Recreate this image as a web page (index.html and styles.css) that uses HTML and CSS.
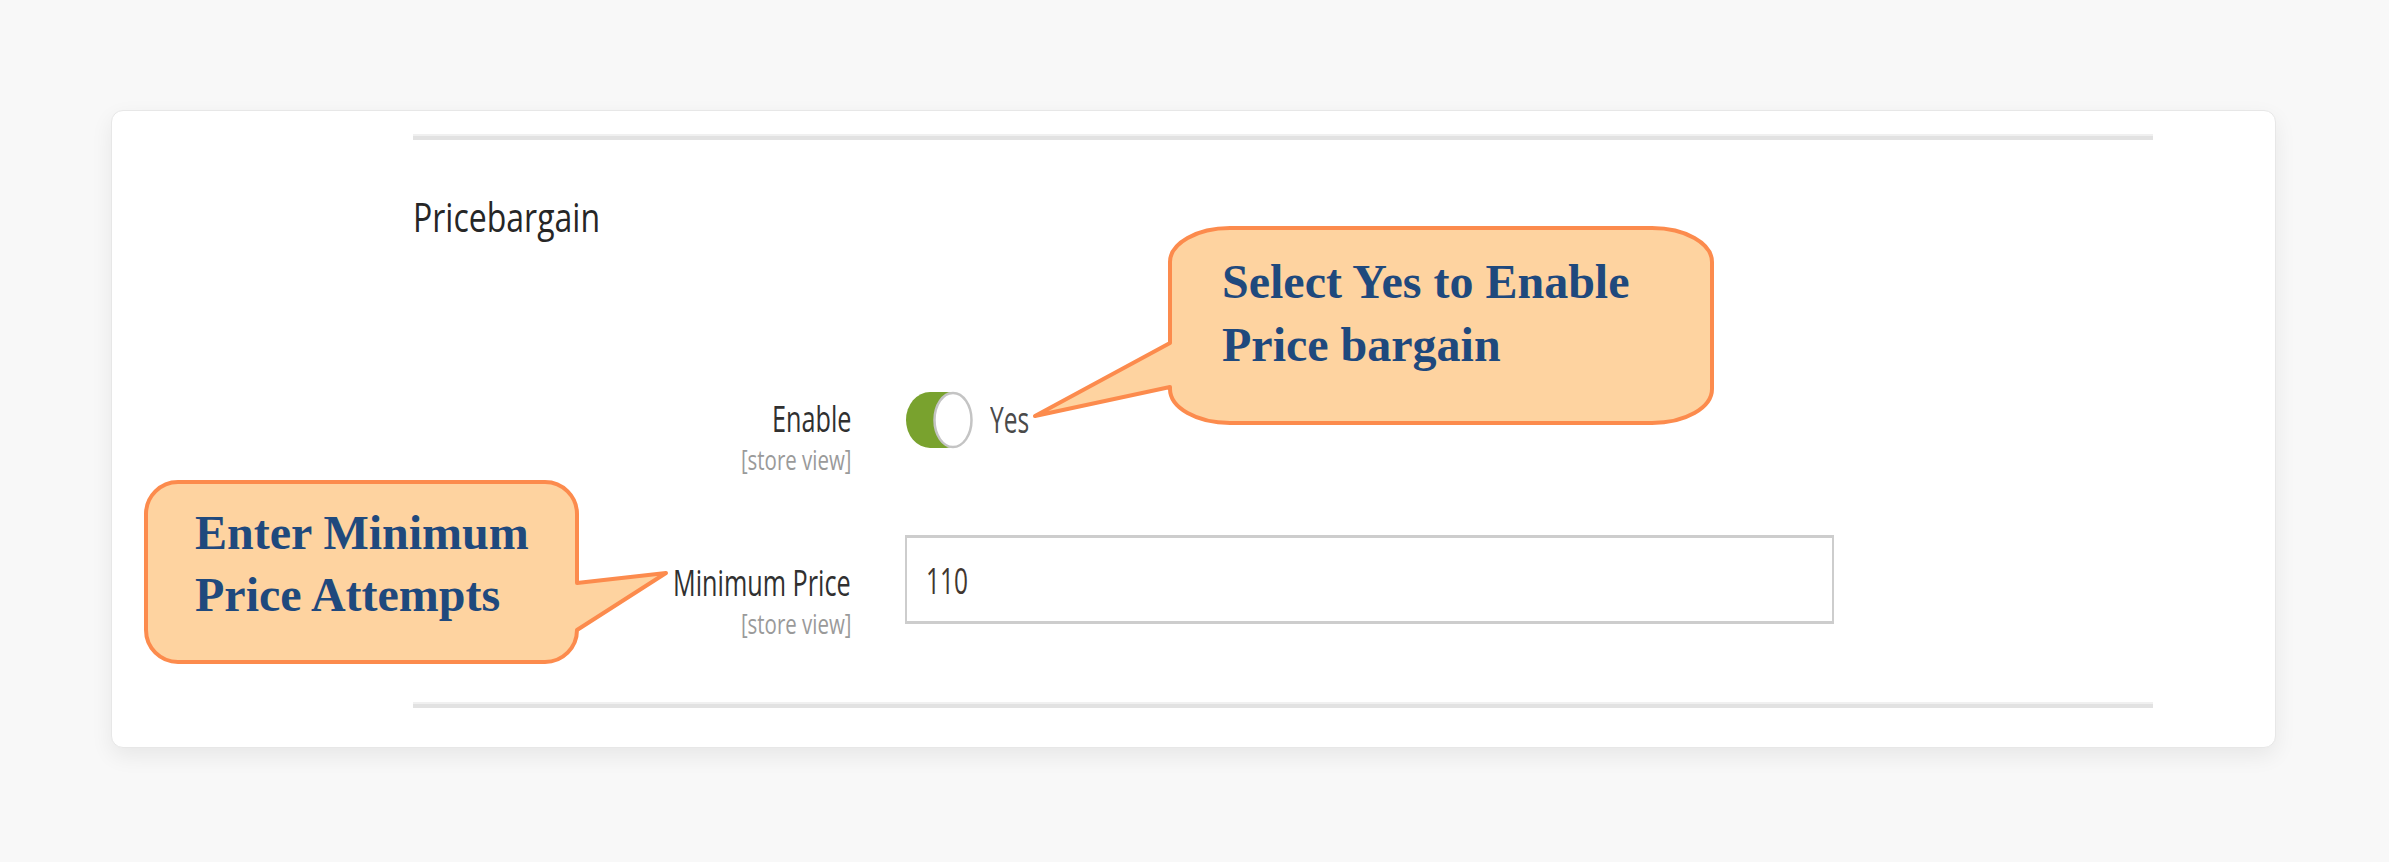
FILE: index.html
```html
<!DOCTYPE html>
<html lang="en">
<head>
<meta charset="utf-8">
<title>Pricebargain</title>
<link rel="stylesheet" href="styles.css">
</head>
<body>
<div class="page">
  <section class="card">
    <div class="content">
      <div class="rule"></div>
      <h2 class="legend"><span class="sq sq-left sq-legend">Pricebargain</span></h2>

      <div class="row row-enable">
        <div class="label-col">
          <div class="label"><span class="sq sq-label">Enable</span></div>
          <div class="scope"><span class="sq sq-scope">[store view]</span></div>
        </div>
        <div class="control">
          <svg class="toggle" width="68" height="58" viewBox="0 0 68 58" aria-hidden="true">
            <rect x="1" y="1" width="64" height="56" rx="24" ry="28" fill="#79a22e"/>
            <ellipse cx="48" cy="29" rx="18.5" ry="27" fill="#ffffff" stroke="#c4c4c4" stroke-width="2.5"/>
          </svg>
          <span class="toggle-text sq sq-left sq-value">Yes</span>
        </div>
      </div>

      <div class="row row-min">
        <div class="label-col">
          <div class="label"><span class="sq sq-label">Minimum Price</span></div>
          <div class="scope"><span class="sq sq-scope">[store view]</span></div>
        </div>
        <div class="control">
          <div class="input"><span class="sq sq-left sq-value">110</span></div>
        </div>
      </div>

      <div class="rule rule-bottom"></div>
    </div>
  </section>

  <div class="callout callout-enable">
    <svg width="686" height="203" viewBox="0 0 686 203" aria-hidden="true">
      <path d="M 200,4 H 622 A 60 34 0 0 1 682,38 V 165 A 60 34 0 0 1 622,199 H 200 A 60 34 0 0 1 140,165 V 163 L 5,192 L 140,119 V 38 A 60 34 0 0 1 200,4 Z" fill="#fed3a0" stroke="#fc8b4d" stroke-width="4" stroke-linejoin="round"/>
    </svg>
    <div class="callout-text">Select Yes to Enable<br>Price bargain</div>
  </div>

  <div class="callout callout-min">
    <svg width="528" height="188" viewBox="0 0 528 188" aria-hidden="true">
      <path d="M 36,4 H 403 A 32 32 0 0 1 435,36 V 105 L 524,95 L 435,152 A 32 32 0 0 1 403,184 H 36 A 32 32 0 0 1 4,152 V 36 A 32 32 0 0 1 36,4 Z" fill="#fed3a0" stroke="#fc8b4d" stroke-width="4" stroke-linejoin="round"/>
    </svg>
    <div class="callout-text">Enter Minimum<br>Price Attempts</div>
  </div>
</div>
</body>
</html>
```

FILE: styles.css
```css
html, body {
  margin: 0;
  padding: 0;
  background: #f8f8f8;
}

body {
  width: 2389px;
  height: 862px;
  overflow: hidden;
  font-family: "Open Sans", "Liberation Sans", sans-serif;
  color: #303030;
}

.page {
  position: relative;
  width: 2389px;
  height: 862px;
  padding-top: 110px;
  box-sizing: border-box;
}

.card {
  margin-left: 111px;
  width: 2165px;
  height: 638px;
  box-sizing: border-box;
  background: #ffffff;
  border: 1px solid #e7e7e7;
  border-radius: 12px;
  box-shadow: 0 8px 22px rgba(0, 0, 0, 0.07);
  padding-left: 301px;
}

.content {
  width: 1740px;
  display: flex;
  flex-direction: column;
}

.rule {
  margin-top: 23px;
  height: 4px;
  background: #e2e2e2;
  border-top: 2px solid #f0f0f0;
}

.rule-bottom {
  margin-top: 63px;
}

.sq {
  display: inline-block;
  white-space: nowrap;
  transform-origin: 100% 50%;
}

.sq-left {
  transform-origin: 0 50%;
}

.legend {
  margin: 50px 0 0 0;
  font-size: 40px;
  line-height: 54px;
  font-weight: 400;
  color: #262626;
}

.sq-legend {
  transform: scaleX(0.8);
}

.row {
  display: flex;
  align-items: flex-start;
}

.row-enable {
  margin-top: 147px;
}

.row-enable .label-col {
  padding-top: 6px;
}

.row-min {
  margin-top: 60px;
}

.row-min .label-col {
  padding-top: 26px;
}

.label-col {
  width: 438px;
  text-align: right;
}

.label {
  font-size: 36px;
  line-height: 44px;
  font-weight: 400;
  color: #303030;
}

.sq-label {
  transform: scaleX(0.7);
}

.scope {
  margin-top: 2px;
  font-size: 28px;
  line-height: 32px;
  font-weight: 400;
  color: #9a9a9a;
}

.sq-scope {
  transform: scaleX(0.73);
}

.control {
  margin-left: 54px;
  display: flex;
  align-items: center;
}

.toggle {
  display: block;
}

.toggle-text {
  margin-left: 17px;
  font-size: 36px;
  line-height: 44px;
  color: #4a4a4a;
}

.sq-value {
  transform: scaleX(0.68);
}

.input {
  width: 929px;
  height: 89px;
  box-sizing: border-box;
  border-style: solid;
  border-color: #cdcdcd;
  border-width: 3px 2px;
  background: #ffffff;
  padding: 2px 0 0 19px;
  display: flex;
  align-items: center;
  font-size: 36px;
  line-height: 44px;
  color: #41362f;
}

.callout {
  position: absolute;
}

.callout svg {
  display: block;
}

.callout-text {
  position: absolute;
  font-family: "Liberation Serif", "Times New Roman", serif;
  font-weight: 700;
  font-size: 48px;
  color: #1f497d;
  white-space: nowrap;
}

.callout-enable {
  left: 1030px;
  top: 224px;
  width: 686px;
  height: 203px;
}

.callout-enable .callout-text {
  left: 192px;
  top: 26px;
  line-height: 63px;
}

.callout-min {
  left: 142px;
  top: 478px;
  width: 528px;
  height: 188px;
}

.callout-min .callout-text {
  left: 53px;
  top: 24px;
  line-height: 62px;
}
```
